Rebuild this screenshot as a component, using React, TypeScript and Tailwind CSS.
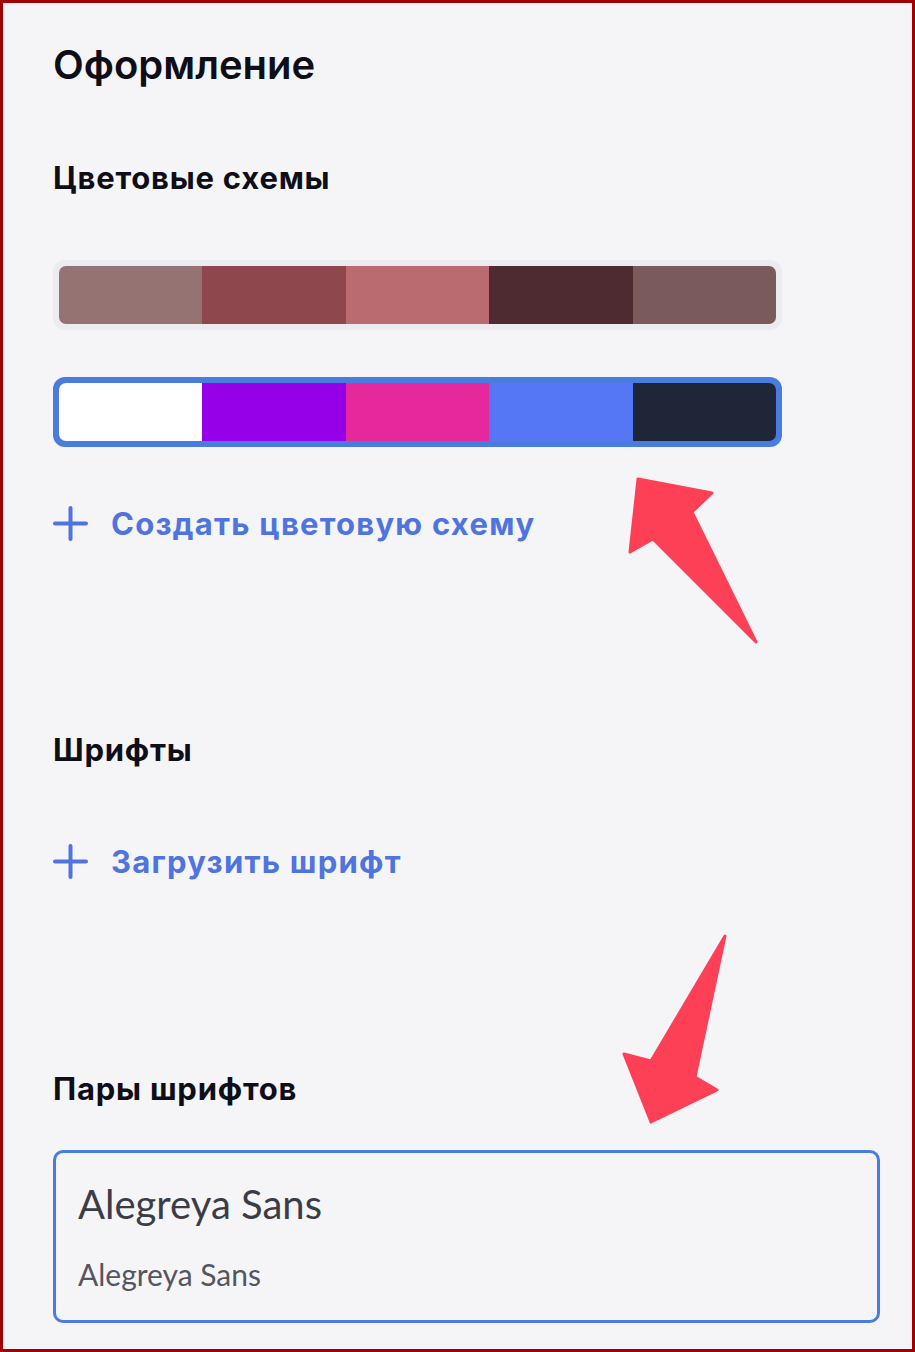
import React from 'react';

const warm = ['#957372', '#8d474d', '#ba6b6f', '#4e2b31', '#7b5a5b'];
const bright = ['#ffffff', '#9500e9', '#e5289b', '#5677f5', '#1f2637'];

function Palette({ colors, active }: { colors: string[]; active?: boolean }) {
  return (
    <div
      className={`w-[729px] rounded-[12px] border-[4px] p-[2px] ${
        active ? 'border-[#4a7ce0] bg-[#4a7ce0]' : 'border-[#ebebf0] bg-[#ebebf0]'
      }`}
    >
      <div className="flex h-[58px] overflow-hidden rounded-[7px]">
        {colors.map((c, i) => (
          <div key={i} className="flex-1" style={{ backgroundColor: c }} />
        ))}
      </div>
    </div>
  );
}

function AddLink({ label }: { label: string }) {
  return (
    <button className="flex h-[34px] items-center gap-[23px] text-[#4f74df]">
      <svg width="35" height="35" viewBox="0 0 35 35" fill="none" stroke="currentColor" strokeWidth="4" strokeLinecap="round">
        <path d="M2 17.5h31M17.5 2v31" />
      </svg>
      <span className="text-[31px] leading-none font-bold tracking-[0.04em]">{label}</span>
    </button>
  );
}

export default function App() {
  return (
    <div
      className="relative h-[1352px] w-[915px] border-[3px] border-[#a00000] bg-[#f5f5f7] px-[50px] pt-[42px]"
      style={{ fontFamily: 'Inter, "Noto Sans", sans-serif' }}
    >
      <h1 className="text-[40px] leading-none font-semibold text-[#0e0e18]">Оформление</h1>

      {/* Цветовые схемы */}
      <h2 className="mt-[77px] text-[31px] leading-none font-bold tracking-[0.025em] text-[#0e0e18]">Цветовые схемы</h2>
      <div className="mt-[67px] flex flex-col gap-[47px]">
        <Palette colors={warm} />
        <Palette colors={bright} active />
      </div>
      <div className="mt-[59px]">
        <AddLink label="Создать цветовую схему" />
      </div>

      {/* Шрифты */}
      <h2 className="mt-[194px] text-[31px] leading-none font-bold tracking-[0.025em] text-[#0e0e18]">Шрифты</h2>
      <div className="mt-[79px]">
        <AddLink label="Загрузить шрифт" />
      </div>

      {/* Пары шрифтов */}
      <h2 className="mt-[195px] text-[31px] leading-none font-bold tracking-[0.025em] text-[#0e0e18]">Пары шрифтов</h2>
      <div
        className="mt-[46px] flex h-[173px] w-[827px] flex-col justify-center gap-[35px] rounded-[10px] border-[3px] border-[#4a7be0] pl-[22px]"
        style={{ fontFamily: 'Lato, "Open Sans", sans-serif' }}
      >
        <div className="text-[40px] leading-none text-[#3c3c46]">Alegreya Sans</div>
        <div className="text-[30px] leading-none text-[#55555f]">Alegreya Sans</div>
      </div>

      {/* annotation arrows */}
      <svg
        className="pointer-events-none absolute -top-[3px] -left-[3px]"
        width="915"
        height="1352"
        viewBox="0 0 915 1352"
      >
        <g fill="#fd4056" stroke="#fd4056" strokeWidth="3" strokeLinejoin="round">
          <polygon points="638,479 712,493 692,512 756,642 653,539 630,552" />
          <polygon points="725,936 695,1077 717,1090 651,1122 624,1054 651,1061" />
        </g>
      </svg>
    </div>
  );
}
